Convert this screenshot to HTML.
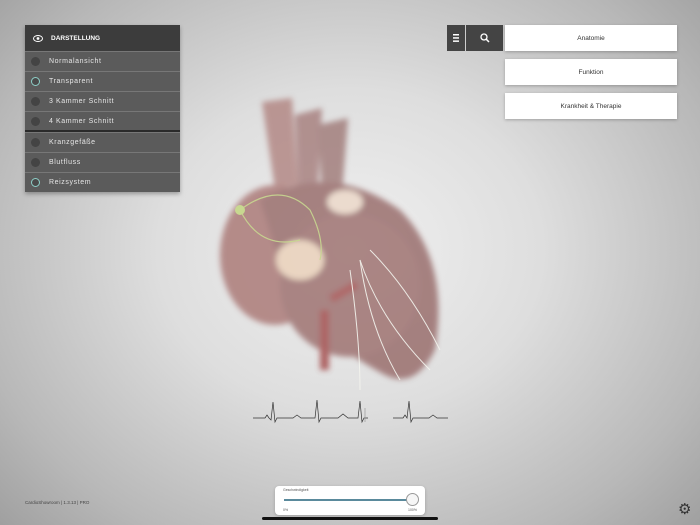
<!DOCTYPE html>
<html><head><meta charset="utf-8"><style>
*{margin:0;padding:0;box-sizing:border-box}
body{width:700px;height:525px;overflow:hidden;position:relative;font-family:"Liberation Sans",sans-serif;
background:radial-gradient(ellipse 480px 400px at 350px 250px,#f0f0f0 0%,#dedede 40%,#b8b8b8 80%,#a0a0a0 100%)}
.menu{position:absolute;left:25px;top:25px;width:155px;box-shadow:0 2px 4px rgba(0,0,0,.3)}
.hd{height:26px;background:#3c3c3c;color:#fff;font-size:6.5px;font-weight:bold;display:flex;align-items:center;padding-left:8px}
.row{height:20px;background:#5b5b5b;border-top:1px solid #777;color:#e6e6e6;font-size:7px;letter-spacing:.6px;display:flex;align-items:center;padding-left:6px}
.c{width:9px;height:9px;border-radius:50%;background:#444;margin-right:9px}
.c.on{background:#4a4a4a;border:1px solid #8ecfc8}
.btn{position:absolute;background:#fff;left:505px;width:172px;height:26px;font-size:6.5px;color:#333;display:flex;align-items:center;justify-content:center;box-shadow:0 1px 3px rgba(0,0,0,.25)}
.ib{position:absolute;top:25px;height:26px;background:#444;display:flex;align-items:center;justify-content:center}
</style></head><body>
<svg style="position:absolute;left:200px;top:90px" width="260" height="310">
<defs><filter id="b"><feGaussianBlur stdDeviation="3"/></filter></defs>
<g filter="url(#b)" opacity=".8">
<path d="M62 12 L92 8 L98 95 L75 100Z" fill="#b08380"/>
<path d="M95 25 L122 18 L118 95 L98 95Z" fill="#a47c7a"/>
<path d="M118 35 L148 28 L142 105 L122 105Z" fill="#9e7876"/>
<ellipse cx="75" cy="165" rx="55" ry="70" fill="#a87472"/>
<path d="M60 110 Q130 70 200 120 Q250 170 235 260 Q215 300 185 285 Q120 250 90 205Z" fill="#956866"/>
<ellipse cx="150" cy="195" rx="70" ry="72" fill="#9a6c6a"/>
<ellipse cx="100" cy="170" rx="24" ry="20" fill="#ead0b8"/>
<ellipse cx="145" cy="112" rx="18" ry="12" fill="#ecd8c8"/>
<rect x="120" y="220" width="9" height="60" fill="#a04444"/>
<rect x="130" y="200" width="30" height="8" fill="#a04848" transform="rotate(-30 140 205)"/>
</g>
<g fill="none" stroke="#c8d890" stroke-width="1.2" opacity=".9">
<path d="M40 120 Q80 90 110 120 Q125 150 120 170"/><path d="M40 120 Q60 160 100 150"/>
</g>
<g fill="none" stroke="#f4f4ee" stroke-width="1" opacity=".9">
<path d="M160 170 Q180 230 230 280"/><path d="M160 170 Q170 240 200 290"/><path d="M150 180 Q160 250 160 300"/><path d="M170 160 Q210 200 240 260"/>
</g>
<circle cx="40" cy="120" r="5" fill="#c8d890"/>
</svg>
<svg style="position:absolute;left:253px;top:398px" width="195" height="28" fill="none" stroke="#333" stroke-width=".7">
<path d="M0 20 H12 L14 17 L16 20 L18 22 L20 4 L22 24 L24 20 H40 L44 17 L48 20 H62 L64 2 L66 24 L68 20 H85 L90 16 L95 20 H105 L107 3 L109 24 L111 20 H115"/>
<path d="M140 20 H150 L152 17 L154 20 L156 3 L158 24 L160 20 H176 L180 17 L184 20 H195"/>
<path d="M112 10 V24" stroke="#999"/>
</svg>
<div class="menu">
<div class="hd"><svg width="10" height="7" style="margin-right:8px"><ellipse cx="5" cy="3.5" rx="4.5" ry="3" fill="none" stroke="#fff" stroke-width="1"/><circle cx="5" cy="3.5" r="1.4" fill="#fff"/></svg>DARSTELLUNG</div>
<div class="row"><span class="c"></span>Normalansicht</div>
<div class="row"><span class="c on"></span>Transparent</div>
<div class="row"><span class="c"></span>3 Kammer Schnitt</div>
<div class="row" style="border-bottom:2px solid #2a2a2a;height:21px"><span class="c"></span>4 Kammer Schnitt</div>
<div class="row"><span class="c"></span>Kranzgefäße</div>
<div class="row"><span class="c"></span>Blutfluss</div>
<div class="row"><span class="c on"></span>Reizsystem</div>
</div>
<div class="ib" style="left:447px;width:18px"><svg width="6" height="8"><rect y="0" width="6" height="1.5" fill="#fff"/><rect y="3.2" width="6" height="1.5" fill="#fff"/><rect y="6.4" width="6" height="1.5" fill="#fff"/></svg></div>
<div class="ib" style="left:466px;width:37px"><svg width="10" height="10"><circle cx="4" cy="4" r="3" fill="none" stroke="#fff" stroke-width="1.3"/><path d="M6.2 6.2L9 9" stroke="#fff" stroke-width="1.5"/></svg></div>
<div class="btn" style="top:25px">Anatomie</div>
<div class="btn" style="top:59px">Funktion</div>
<div class="btn" style="top:93px">Krankheit &amp; Therapie</div>
<div style="position:absolute;left:275px;top:486px;width:150px;height:29px;background:#fff;border-radius:4px;box-shadow:0 1px 3px rgba(0,0,0,.2)">
<div style="position:absolute;left:8px;top:2px;font-size:3.5px;color:#555">Geschwindigkeit</div>
<div style="position:absolute;left:9px;top:13px;width:130px;height:2px;background:#5a8a9c"></div>
<div style="position:absolute;left:131px;top:7px;width:13px;height:13px;border-radius:50%;background:#f6f6f6;border:1px solid #999"></div>
<div style="position:absolute;left:8px;top:22px;font-size:3.5px;color:#555">0%</div>
<div style="position:absolute;left:133px;top:22px;font-size:3.5px;color:#555">100%</div>
</div>
<div style="position:absolute;left:262px;top:517px;width:176px;height:3px;border-radius:2px;background:#111"></div>
<div style="position:absolute;left:25px;top:500px;font-size:4.5px;color:#444">CardioShowroom | 1.3.13 | PRO</div>
<div style="position:absolute;left:678px;top:502px;font-size:15px;color:#333;line-height:15px">⚙</div>
</body></html>
